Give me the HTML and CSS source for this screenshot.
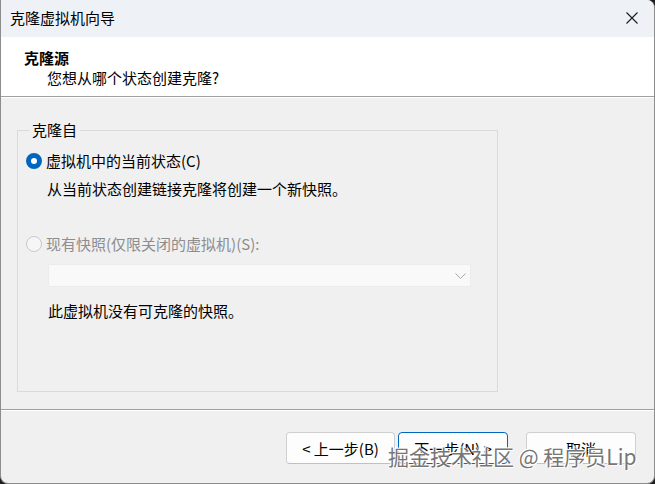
FILE: index.html
```html
<!DOCTYPE html>
<html lang="zh-CN">
<head>
<meta charset="utf-8">
<title>克隆虚拟机向导</title>
<link rel="stylesheet" href="styles.css">
</head>
<body>
<div class="window">
  <div class="titlebar">
    <span class="title">克隆虚拟机向导</span>
    <svg class="close" width="12" height="12" viewBox="0 0 12 12"><path d="M0.5 0.5 L11.5 11.5 M11.5 0.5 L0.5 11.5" stroke="#1a1a1a" stroke-width="1.1" fill="none"/></svg>
  </div>
  <div class="header">
    <div class="h-title">克隆源</div>
    <div class="h-sub">您想从哪个状态创建克隆?</div>
  </div>
  <div class="content">
    <fieldset class="group">
      <legend class="legend">克隆自</legend>
      <div class="radio-row">
        <span class="radio checked"></span>
        <span class="label">虚拟机中的当前状态(C)</span>
      </div>
      <div class="desc">从当前状态创建链接克隆将创建一个新快照。</div>
      <div class="radio-row second">
        <span class="radio disabled"></span>
        <span class="label muted">现有快照(仅限关闭的虚拟机)(S):</span>
      </div>
      <div class="combo">
        <svg width="11" height="6" viewBox="0 0 11 6"><path d="M0.5 0.5 L5.5 5.5 L10.5 0.5" stroke="#a8a8a8" stroke-width="1" fill="none"/></svg>
      </div>
      <div class="note">此虚拟机没有可克隆的快照。</div>
    </fieldset>
  </div>
  <div class="footer">
    <button class="btn prev">&lt; 上一步(B)</button>
    <button class="btn primary">下一步(N) &gt;</button>
    <button class="btn cancel">取消</button>
  </div>
  <div class="watermark">掘金技术社区 @ 程序员Lip</div>
</div>
</body>
</html>
```

FILE: styles.css
```css
html, body {
  margin: 0;
  padding: 0;
  background: #1e1e1e;
}
body {
  width: 655px;
  height: 484px;
  overflow: hidden;
  font-family: "Noto Sans CJK SC", "Noto Sans", sans-serif;
  font-size: 15px;
  color: #000;
}
.window {
  position: relative;
  width: 655px;
  height: 484px;
  box-sizing: border-box;
  background: #f0f0f0;
  border: 1px solid #8d8d8d;
  border-top: none;
  border-radius: 0 8px 8px 8px;
  overflow: hidden;
  display: flex;
  flex-direction: column;
}
.titlebar {
  height: 37px;
  flex: none;
  background: #eef2f7;
  display: flex;
  align-items: center;
  justify-content: space-between;
  padding: 0 16px 0 9px;
}
.title {
  line-height: 20px;
  margin-top: -1px;
}
.close {
  margin-top: -1px;
}
.header {
  height: 60px;
  flex: none;
  background: #fff;
  border-bottom: 1px solid #a0a0a0;
  box-shadow: 0 1px 0 #fff;
  box-sizing: border-box;
  padding: 11px 0 0 23px;
}
.h-title {
  font-weight: bold;
  line-height: 20px;
}
.h-sub {
  line-height: 20px;
  padding-left: 23px;
}
.content {
  flex: 1;
  padding: 23px 0 0 16px;
  border-bottom: 1px solid #a0a0a0;
  box-shadow: 0 1px 0 #fff;
  position: relative;
}
.group {
  margin: 0;
  width: 481px;
  height: 272px;
  box-sizing: border-box;
  border: 1px solid #dadada;
  padding: 11px 0 0 8px;
}
.legend {
  padding: 0 3px;
  margin-left: 3px;
  line-height: 20px;
}
.radio-row {
  display: flex;
  align-items: center;
  height: 20px;
  gap: 4px;
}
.radio-row.second {
  margin-top: 35px;
}
.radio {
  width: 16px;
  height: 16px;
  box-sizing: border-box;
  border-radius: 50%;
  flex: none;
}
.radio.checked {
  border: 5px solid #0067c0;
  background: #fff;
}
.radio.disabled {
  border: 1px solid #c9c9c9;
  background: #f6f6f6;
}
.label {
  line-height: 20px;
}
.muted {
  color: #8d8d8d;
}
.desc {
  margin-top: 8px;
  padding-left: 21px;
  line-height: 20px;
}
.combo {
  margin: 10px 0 0 22px;
  width: 423px;
  height: 23px;
  box-sizing: border-box;
  background: #f9f9f9;
  border: 1px solid #ececec;
  border-radius: 2px;
  display: flex;
  align-items: center;
  justify-content: flex-end;
  padding-right: 4px;
}
.note {
  margin-top: 14px;
  padding-left: 22px;
  line-height: 20px;
}
.footer {
  height: 73px;
  flex: none;
  display: flex;
  align-items: flex-start;
  justify-content: flex-end;
  padding: 22px 18px 0 0;
  box-sizing: border-box;
}
.btn {
  width: 110px;
  height: 32px;
  box-sizing: border-box;
  background: #fdfdfd;
  border: 1px solid #d0d0d0;
  border-bottom-color: #c0c0c0;
  border-radius: 4px;
  font-family: "Noto Sans CJK SC", "Noto Sans", sans-serif;
  font-size: 15px;
  color: #000;
  padding: 0;
}
.btn.prev {
  width: 109px;
}
.btn.primary {
  border: 1px solid #0067c0;
  margin-left: 3px;
}
.btn.cancel {
  margin-left: 18px;
}
.watermark {
  position: absolute;
  left: 387px;
  top: 441px;
  font-size: 21px;
  line-height: 30px;
  color: #767676;
  text-shadow: 0 0 1px #fff, 0 0 2px #fff, 1px 1px 0 #fff, -1px -1px 0 #fff;
  white-space: nowrap;
}
```
